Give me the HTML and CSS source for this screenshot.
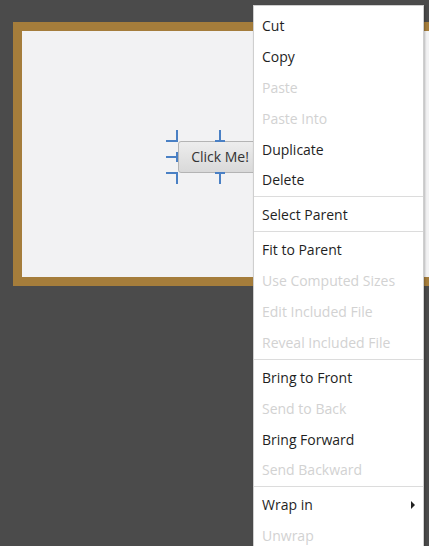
FILE: index.html
```html
<!DOCTYPE html>
<html>
<head>
<meta charset="utf-8">
<link rel="stylesheet" href="styles.css">
</head>
<body>
<div class="stage">
  <div class="frame">
    <div class="inner">
      <div class="btn">Click Me!</div>
      <span class="h h-tl"></span>
      <span class="h h-tm"></span>
      <span class="h h-ml"></span>
      <span class="h h-bl"></span>
      <span class="h h-bm"></span>
    </div>
  </div>
  <ul class="menu">
    <li class="item">Cut</li>
    <li class="item">Copy</li>
    <li class="item off">Paste</li>
    <li class="item off">Paste Into</li>
    <li class="item">Duplicate</li>
    <li class="item">Delete</li>
    <li class="sep"></li>
    <li class="item">Select Parent</li>
    <li class="sep"></li>
    <li class="item">Fit to Parent</li>
    <li class="item off">Use Computed Sizes</li>
    <li class="item off">Edit Included File</li>
    <li class="item off">Reveal Included File</li>
    <li class="sep"></li>
    <li class="item">Bring to Front</li>
    <li class="item off">Send to Back</li>
    <li class="item">Bring Forward</li>
    <li class="item off">Send Backward</li>
    <li class="sep"></li>
    <li class="item sub">Wrap in<span class="arrow"></span></li>
    <li class="item off">Unwrap</li>
  </ul>
</div>
</body>
</html>
```

FILE: styles.css
```css
html, body {
  margin: 0;
  padding: 0;
  height: 100%;
  overflow: hidden;
}
body {
  background: #4b4b4b;
  font-family: "Open Sans", "Noto Sans", sans-serif;
}
.stage {
  position: relative;
  width: 429px;
  height: 546px;
  overflow: hidden;
}
.frame {
  margin: 22px 0 0 13px;
  width: 460px;
  height: 264px;
  box-sizing: border-box;
  border: 9px solid #a57d3b;
  background: #f2f2f3;
}
.inner {
  position: relative;
  height: 100%;
}
.btn {
  position: absolute;
  left: 156px;
  top: 110px;
  width: 82px;
  height: 30px;
  border: 1px solid #b4b4b4;
  border-radius: 3px;
  background: linear-gradient(#ededed, #d9d9d9);
  color: #333;
  font-size: 14px;
  line-height: 30px;
  text-align: center;
}
.h {
  position: absolute;
  width: 12px;
  height: 12px;
}
.h::before, .h::after {
  content: "";
  position: absolute;
  background: #4a80c4;
}
/* top-left */
.h-tl { left: 144px; top: 99px; }
.h-tl::before { left: 0; top: 10px; width: 12px; height: 2px; }
.h-tl::after { left: 10px; top: 0; width: 2px; height: 12px; }
/* top-middle */
.h-tm { left: 192px; top: 99px; }
.h-tm::before { left: 1px; top: 10px; width: 10px; height: 2px; }
.h-tm::after { left: 5px; top: 0; width: 2px; height: 12px; }
/* middle-left */
.h-ml { left: 144px; top: 120px; }
.h-ml::before { left: 0; top: 5px; width: 12px; height: 2px; }
.h-ml::after { left: 10px; top: 1px; width: 2px; height: 10px; }
/* bottom-left */
.h-bl { left: 144px; top: 141px; }
.h-bl::before { left: 0; top: 0; width: 12px; height: 2px; }
.h-bl::after { left: 10px; top: 0; width: 2px; height: 12px; }
/* bottom-middle */
.h-bm { left: 192px; top: 141px; }
.h-bm::before { left: 1px; top: 0; width: 10px; height: 2px; }
.h-bm::after { left: 5px; top: 0; width: 2px; height: 12px; }

.menu {
  position: absolute;
  left: 253px;
  top: 5px;
  width: 171px;
  margin: 0;
  padding: 4px 0 0;
  list-style: none;
  box-sizing: border-box;
  background: #fff;
  border: 1px solid #cfcfcf;
  box-shadow: 1px 1px 2px rgba(0,0,0,0.25);
}
.item {
  display: flex;
  align-items: center;
  height: 30.9px;
  padding: 0 0 0 8px;
  font-size: 14px;
  color: #1f1f1f;
}
.item.off {
  color: #d2d2d2;
}
.sep {
  height: 1px;
  margin: 1px 0 2px;
  background: #dcdcdc;
}
.sub {
  justify-content: space-between;
  padding-right: 8px;
}
.arrow {
  width: 0;
  height: 0;
  border-left: 4px solid #222;
  border-top: 4px solid transparent;
  border-bottom: 4px solid transparent;
}
```
